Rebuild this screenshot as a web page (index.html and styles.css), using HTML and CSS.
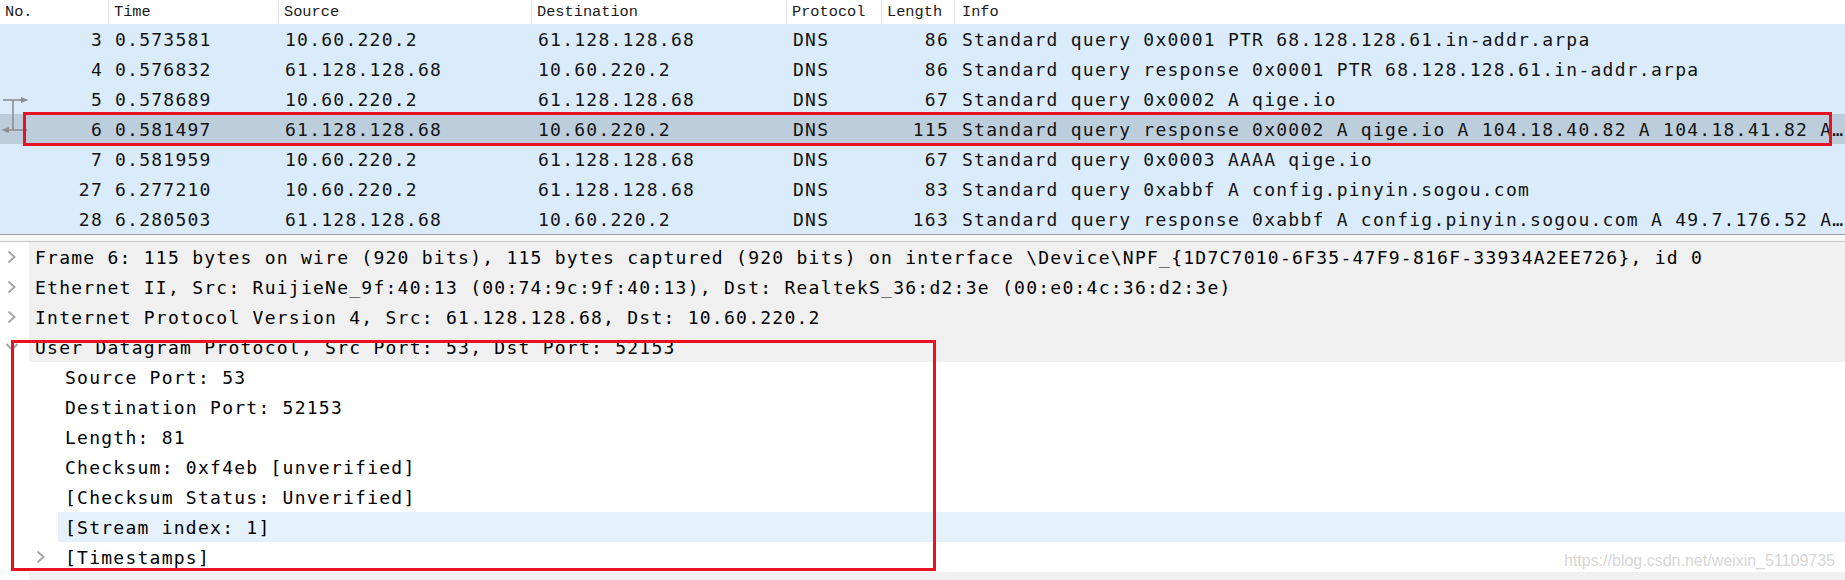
FILE: index.html
```html
<!DOCTYPE html>
<html>
<head>
<meta charset="utf-8">
<title>Wireshark</title>
<link rel="stylesheet" href="styles.css">
</head>
<body>
<div class="app">
  <div class="plist">
    <div class="prow phead">
      <div class="c c-no">No.</div>
      <div class="c">Time</div>
      <div class="c">Source</div>
      <div class="c">Destination</div>
      <div class="c">Protocol</div>
      <div class="c c-len">Length</div>
      <div class="c c-info">Info</div>
    </div>
    <div class="prow dns">
      <div class="c c-no">3</div><div class="c">0.573581</div><div class="c">10.60.220.2</div><div class="c">61.128.128.68</div><div class="c">DNS</div><div class="c c-len">86</div><div class="c c-info">Standard query 0x0001 PTR 68.128.128.61.in-addr.arpa</div>
    </div>
    <div class="prow dns">
      <div class="c c-no">4</div><div class="c">0.576832</div><div class="c">61.128.128.68</div><div class="c">10.60.220.2</div><div class="c">DNS</div><div class="c c-len">86</div><div class="c c-info">Standard query response 0x0001 PTR 68.128.128.61.in-addr.arpa</div>
    </div>
    <div class="prow dns">
      <div class="c c-no">5</div><div class="c">0.578689</div><div class="c">10.60.220.2</div><div class="c">61.128.128.68</div><div class="c">DNS</div><div class="c c-len">67</div><div class="c c-info">Standard query 0x0002 A qige.io</div>
    </div>
    <div class="prow sel">
      <div class="c c-no">6</div><div class="c">0.581497</div><div class="c">61.128.128.68</div><div class="c">10.60.220.2</div><div class="c">DNS</div><div class="c c-len">115</div><div class="c c-info">Standard query response 0x0002 A qige.io A 104.18.40.82 A 104.18.41.82 A…</div>
    </div>
    <div class="prow dns">
      <div class="c c-no">7</div><div class="c">0.581959</div><div class="c">10.60.220.2</div><div class="c">61.128.128.68</div><div class="c">DNS</div><div class="c c-len">67</div><div class="c c-info">Standard query 0x0003 AAAA qige.io</div>
    </div>
    <div class="prow dns">
      <div class="c c-no">27</div><div class="c">6.277210</div><div class="c">10.60.220.2</div><div class="c">61.128.128.68</div><div class="c">DNS</div><div class="c c-len">83</div><div class="c c-info">Standard query 0xabbf A config.pinyin.sogou.com</div>
    </div>
    <div class="prow dns">
      <div class="c c-no">28</div><div class="c">6.280503</div><div class="c">61.128.128.68</div><div class="c">10.60.220.2</div><div class="c">DNS</div><div class="c c-len">163</div><div class="c c-info">Standard query response 0xabbf A config.pinyin.sogou.com A 49.7.176.52 A…</div>
    </div>
  </div>

  <div class="splitter"></div>

  <div class="tree">
    <div class="node top">
      <div class="twisty"><svg viewBox="0 0 12 12"><polyline points="2.5,0.5 8.5,6 2.5,11.5" class="chev"/></svg></div>
      <div class="label">Frame 6: 115 bytes on wire (920 bits), 115 bytes captured (920 bits) on interface \Device\NPF_{1D7C7010-6F35-47F9-816F-33934A2EE726}, id 0</div>
    </div>
    <div class="node top">
      <div class="twisty"><svg viewBox="0 0 12 12"><polyline points="2.5,0.5 8.5,6 2.5,11.5" class="chev"/></svg></div>
      <div class="label">Ethernet II, Src: RuijieNe_9f:40:13 (00:74:9c:9f:40:13), Dst: RealtekS_36:d2:3e (00:e0:4c:36:d2:3e)</div>
    </div>
    <div class="node top">
      <div class="twisty"><svg viewBox="0 0 12 12"><polyline points="2.5,0.5 8.5,6 2.5,11.5" class="chev"/></svg></div>
      <div class="label">Internet Protocol Version 4, Src: 61.128.128.68, Dst: 10.60.220.2</div>
    </div>
    <div class="node top">
      <div class="twisty"><svg viewBox="0 0 12 12"><polyline points="0.5,3 6,8.5 11.5,3" class="chev"/></svg></div>
      <div class="label">User Datagram Protocol, Src Port: 53, Dst Port: 52153</div>
    </div>
    <div class="node sub">
      <div class="indent"></div><div class="twisty"></div>
      <div class="label">Source Port: 53</div>
    </div>
    <div class="node sub">
      <div class="indent"></div><div class="twisty"></div>
      <div class="label">Destination Port: 52153</div>
    </div>
    <div class="node sub">
      <div class="indent"></div><div class="twisty"></div>
      <div class="label">Length: 81</div>
    </div>
    <div class="node sub">
      <div class="indent"></div><div class="twisty"></div>
      <div class="label">Checksum: 0xf4eb [unverified]</div>
    </div>
    <div class="node sub">
      <div class="indent"></div><div class="twisty"></div>
      <div class="label">[Checksum Status: Unverified]</div>
    </div>
    <div class="node sub current">
      <div class="indent"></div><div class="twisty"></div>
      <div class="label">[Stream index: 1]</div>
    </div>
    <div class="node sub">
      <div class="indent"></div>
      <div class="twisty"><svg viewBox="0 0 12 12"><polyline points="2.5,0.5 8.5,6 2.5,11.5" class="chev"/></svg></div>
      <div class="label">[Timestamps]</div>
    </div>
    <div class="node top">
      <div class="twisty"><svg viewBox="0 0 12 12"><polyline points="2.5,0.5 8.5,6 2.5,11.5" class="chev"/></svg></div>
      <div class="label">Domain Name System (response)</div>
    </div>
  </div>

  <svg class="related" viewBox="0 0 32 40">
    <line x1="3" y1="5" x2="22" y2="5"/>
    <polygon points="21,2 28.5,5 21,8"/>
    <line x1="13" y1="5" x2="13" y2="35"/>
    <line x1="8" y1="35" x2="27" y2="35"/>
    <polygon points="1.5,35 9,32 9,38"/>
  </svg>
  <div class="mark mark-row"></div>
  <div class="mark mark-tree"></div>
  <div class="watermark">https://blog.csdn.net/weixin_51109735</div>
</div>
</body>
</html>
```
FILE: styles.css
```css
html, body {
  margin: 0;
  padding: 0;
  background: #ffffff;
  overflow: hidden;
}

body {
  width: 1845px;
  height: 580px;
}

.app {
  position: relative;
  display: flex;
  flex-direction: column;
  width: 1845px;
  height: 580px;
  overflow: hidden;
  font-family: "DejaVu Sans Mono", monospace;
  font-size: 18px;
  letter-spacing: 1.25px;
  color: #141414;
}

/* ---------- packet list ---------- */
.plist {
  display: flex;
  flex-direction: column;
  flex: none;
}

.prow {
  display: grid;
  grid-template-columns: 109px 170px 253px 255px 95px 73px 1fr;
  height: 30px;
  align-items: center;
  white-space: nowrap;
  flex: none;
}

.prow .c {
  box-sizing: border-box;
  padding-left: 6px;
  overflow: hidden;
}

.prow .c-no {
  text-align: right;
  padding-left: 0;
  padding-right: 6px;
}

.prow .c-len {
  text-align: right;
  padding-left: 0;
  padding-right: 6px;
}

.prow .c-info {
  padding-left: 7px;
}

.dns {
  background: #daebfb;
}

.sel {
  background: #bccddc;
}

.phead {
  height: 24px;
  background: #ffffff;
  font-family: "Liberation Mono", monospace;
  font-size: 15.3px;
  letter-spacing: 0;
  color: #1a1a1a;
}

.phead .c {
  height: 100%;
  display: flex;
  align-items: center;
  padding-left: 5px;
  padding-right: 0;
  border-right: 1px solid #e4e4e4;
}

.phead .c-no,
.phead .c-len {
  text-align: left;
  padding-left: 5px;
  padding-right: 0;
}

.phead .c-info {
  border-right: none;
  padding-left: 7px;
}

/* ---------- splitter ---------- */
.splitter {
  flex: none;
  height: 8px;
  box-sizing: border-box;
  border-top: 1px solid #a0a0a0;
  border-bottom: 1px solid #c4c4c4;
  background: #f6f6f6;
}

/* ---------- detail tree ---------- */
.tree {
  display: flex;
  flex-direction: column;
  flex: none;
  color: #000000;
}

.node {
  display: flex;
  height: 30px;
  flex: none;
  white-space: nowrap;
}

.indent {
  width: 29px;
  flex: none;
}

.twisty {
  width: 29px;
  flex: none;
  box-sizing: border-box;
  padding-left: 6px;
  display: flex;
  align-items: center;
}

.twisty svg {
  width: 12px;
  height: 12px;
  display: block;
}

.chev {
  fill: none;
  stroke: #a6a6a6;
  stroke-width: 2;
}

.label {
  flex: 1;
  display: flex;
  align-items: center;
  padding-left: 6px;
}

.node.top .label {
  background: #f0f0f0;
}

.node.sub .label {
  padding-left: 7px;
}

.node.current .label {
  background: #e5f1fb;
}

/* ---------- overlays ---------- */
.related {
  position: absolute;
  left: 0;
  top: 95px;
  width: 32px;
  height: 40px;
}

.related line {
  stroke: #8f8f8f;
  stroke-width: 1.6;
}

.related polygon {
  fill: #8f8f8f;
}

.mark {
  position: absolute;
  box-sizing: border-box;
  border: 3px solid #e81123;
}

.mark-row {
  left: 23px;
  top: 112px;
  width: 1809px;
  height: 34px;
}

.mark-tree {
  left: 11px;
  top: 340px;
  width: 925px;
  height: 231px;
}

.watermark {
  position: absolute;
  right: 10px;
  top: 553px;
  font-family: "Liberation Sans", Arial, sans-serif;
  font-size: 16px;
  line-height: 16px;
  letter-spacing: 0;
  color: #d6d6d6;
}
```
